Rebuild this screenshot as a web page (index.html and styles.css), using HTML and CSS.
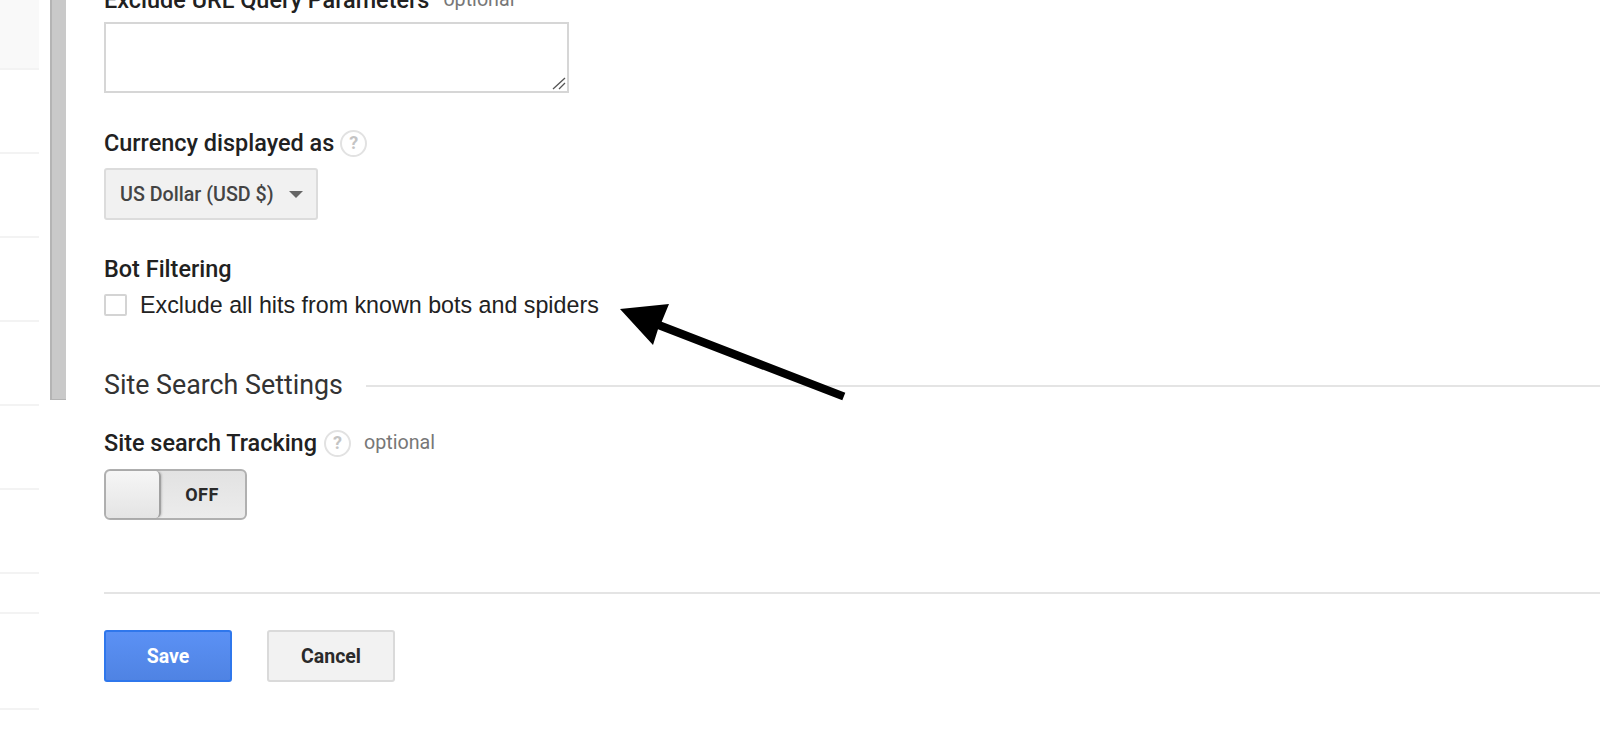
FILE: index.html
```html
<!DOCTYPE html>
<html lang="en">
<head>
    <meta charset="UTF-8">
    <meta name="viewport" content="width=device-width, initial-scale=1.0">
    <title>View Settings</title>
    <link rel="stylesheet" href="styles.css">
</head>
<body>
    <div class="page">
        <!-- left nav rows, only their dividers are visible -->
        <div class="sidebar">
            <div class="nav-row nav-first"></div>
            <div class="nav-row"></div>
            <div class="nav-row"></div>
            <div class="nav-row"></div>
            <div class="nav-row"></div>
            <div class="nav-row"></div>
            <div class="nav-row"></div>
            <div class="nav-row nav-short"></div>
            <div class="nav-row nav-tall"></div>
        </div>

        <div class="scrollbar"></div>

        <div class="main">
            <div class="field-label clipped">Exclude URL Query Parameters <span class="optional">optional</span></div>
            <div class="query-wrap">
                <textarea class="query-box"></textarea>
                <svg class="grip" width="14" height="13" viewBox="0 0 14 13">
                    <path d="M1 12L13 1M7 12L13 6" stroke="#555" stroke-width="1.3" fill="none"/>
                </svg>
            </div>

            <div class="field-label currency-label">Currency displayed as <span class="help">?</span></div>
            <button class="select-btn">US Dollar (USD $) <span class="caret"></span></button>

            <div class="field-label bot-label">Bot Filtering</div>
            <label class="check-row">
                <input type="checkbox" class="check">
                <span class="check-text">Exclude all hits from known bots and spiders</span>
            </label>

            <div class="section-head">
                <span>Site Search Settings</span>
                <div class="section-line"></div>
            </div>

            <div class="field-label tracking-label">Site search Tracking <span class="help">?</span> <span class="optional">optional</span></div>
            <div class="toggle">
                <div class="toggle-knob"></div>
                <div class="toggle-text">OFF</div>
            </div>

            <div class="divider"></div>

            <div class="buttons">
                <button class="btn btn-save">Save</button>
                <button class="btn btn-cancel">Cancel</button>
            </div>
        </div>
    </div>

    <!-- annotation arrow drawn over the page -->
    <svg class="arrow" width="1600" height="739" viewBox="0 0 1600 739">
        <polygon points="620,309 669,304 661.7,321.7 845.3,392.7 842.3,400.3 658,329.3 653,345" fill="#000"/>
    </svg>
</body>
</html>
```

FILE: styles.css
```css
html, body {
    margin: 0;
    height: 100%;
    overflow: hidden;
    background: #fff;
}
body {
    font-family: 'Roboto', sans-serif;
    color: #212121;
}
.page {
    display: flex;
    align-items: flex-start;
    height: 739px;
}
.sidebar {
    width: 39px;
    flex: none;
}
.nav-row {
    height: 82px;
    border-bottom: 2px solid #f3f3f3;
}
.nav-first {
    height: 68px;
    background: #f9f9f9;
}
.nav-short {
    height: 38px;
}
.nav-tall {
    height: 94px;
}
.scrollbar {
    width: 14px;
    height: 399px;
    flex: none;
    margin-left: 11px;
    background: #c9c9c9;
    border-left: 2px solid #b4b4b4;
    border-bottom: 1px solid #b4b4b4;
}
.main {
    flex: 1;
    margin-top: -12px;
    padding-left: 38px;
}
.field-label {
    font-size: 23.45px;
    font-weight: 500;
    line-height: 24px;
    height: 24px;
    display: flex;
    align-items: center;
}
.clipped {
    margin-bottom: 10px;
}
.optional {
    font-size: 19.7px;
    font-weight: 400;
    color: #777;
    margin-left: 14px;
}
.help {
    width: 23px;
    height: 23px;
    margin-left: 6px;
    border: 2px solid #e2e2e2;
    border-radius: 50%;
    font-size: 18px;
    font-weight: 700;
    color: #c4c4c4;
    display: flex;
    align-items: center;
    justify-content: center;
}
.tracking-label .help {
    margin-left: 7px;
}
.tracking-label .optional {
    margin-left: 13px;
}
.query-wrap {
    position: relative;
    width: 465px;
}
.query-box {
    display: block;
    width: 461px;
    height: 67px;
    padding: 0;
    border: 2px solid #d6d6d6;
    border-radius: 0;
    outline: none;
    resize: none;
}
.grip {
    position: absolute;
    right: 3px;
    bottom: 3px;
}
.currency-label {
    margin-top: 38px;
}
.select-btn {
    display: flex;
    align-items: center;
    width: 214px;
    height: 52px;
    margin-top: 13px;
    padding: 0 0 0 14px;
    background: #f1f1f1;
    border: 2px solid #dcdcdc;
    border-radius: 3px;
    font-family: 'Roboto', sans-serif;
    font-size: 19.7px;
    font-weight: 500;
    color: #444;
}
.caret {
    width: 0;
    height: 0;
    margin-left: 15px;
    border-left: 7px solid transparent;
    border-right: 7px solid transparent;
    border-top: 7px solid #666;
}
.bot-label {
    margin-top: 37px;
}
.check-row {
    display: flex;
    align-items: center;
    margin-top: 13px;
    height: 22px;
    font-family: 'Liberation Sans', sans-serif;
    font-size: 23.25px;
    color: #222;
}
.check {
    appearance: none;
    width: 23px;
    height: 22px;
    margin: 0 13px 0 0;
    background: #fff;
    border: 2px solid #d4d4d4;
    border-radius: 2px;
}
.check-text {
    padding-top: 1px;
}
.section-head {
    display: flex;
    align-items: center;
    gap: 23px;
    height: 30px;
    margin-top: 54px;
    font-size: 26.8px;
    color: #333;
}
.section-line {
    flex: 1;
    height: 2px;
    margin-top: 2px;
    background: #e4e4e4;
}
.tracking-label {
    margin-top: 31px;
}
.toggle {
    display: flex;
    width: 143px;
    height: 51px;
    margin-top: 14px;
    box-sizing: border-box;
    background: linear-gradient(#e2e2e2, #ececec);
    border: 2px solid #b0b0b0;
    border-radius: 6px;
}
.toggle-knob {
    width: 53px;
    background: linear-gradient(#f6f6f6, #e4e4e4);
    border-right: 2px solid #a0a0a0;
    border-radius: 5px;
    box-shadow: 1px 0 2px rgba(0, 0, 0, 0.15);
}
.toggle-text {
    flex: 1;
    display: flex;
    align-items: center;
    justify-content: center;
    padding-right: 2px;
    font-size: 18px;
    font-weight: 700;
    letter-spacing: 0.5px;
    color: #2a2a2a;
}
.divider {
    height: 2px;
    margin-top: 72px;
    background: #e4e4e4;
}
.buttons {
    display: flex;
    gap: 35px;
    margin-top: 36px;
}
.btn {
    width: 128px;
    height: 52px;
    border-radius: 3px;
    font-family: 'Roboto', sans-serif;
    font-size: 19.5px;
    font-weight: 700;
}
.btn-save {
    background: linear-gradient(#5b91f5, #4f83e3);
    border: 2px solid #2f77ec;
    color: #fff;
}
.btn-cancel {
    background: #f2f2f2;
    border: 2px solid #dadada;
    color: #2a2a2a;
}
.arrow {
    position: absolute;
    top: 0;
    left: 0;
    pointer-events: none;
}
```
